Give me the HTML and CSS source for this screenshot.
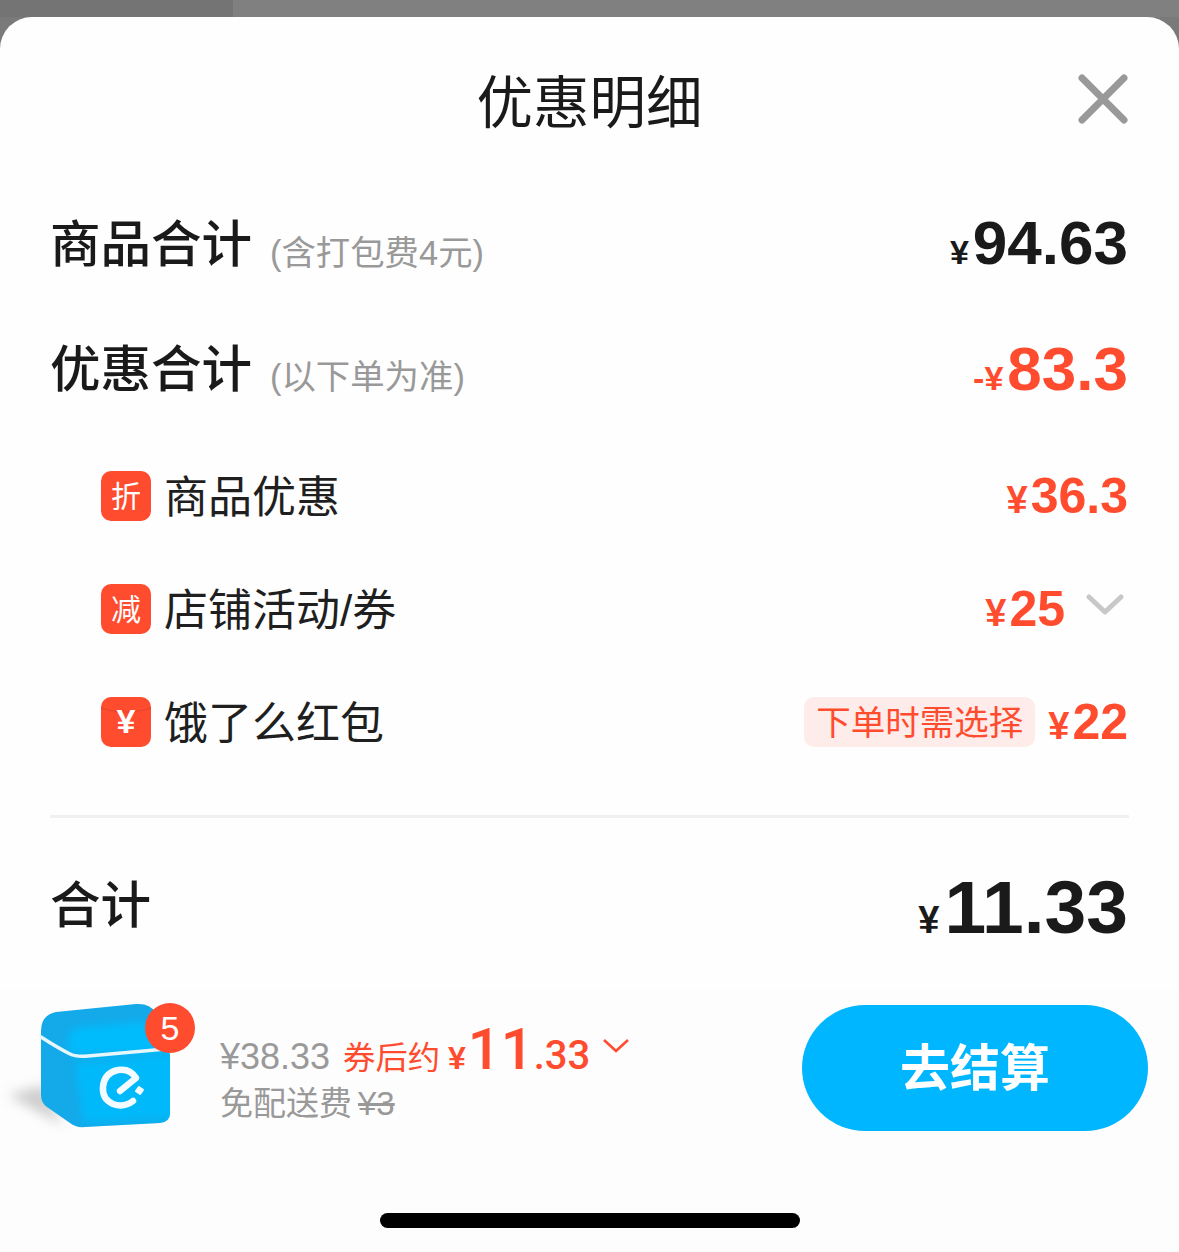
FILE: index.html
```html
<!DOCTYPE html>
<html lang="zh-CN">
<head>
<meta charset="utf-8">
<title>优惠明细</title>
<link rel="stylesheet" href="styles.css">
</head>
<body>
<div class="backdrop"><div class="backdrop-left"></div><div class="backdrop-right"></div></div>
<main class="sheet">
  <header class="head">
    <h1 class="title">优惠明细</h1>
    <svg class="close" viewBox="0 0 54 54" width="54" height="54"><path d="M6 6 L48 48 M48 6 L6 48" stroke="#999" stroke-width="7" stroke-linecap="round" fill="none"/></svg>
  </header>
  <section class="details">
    <div class="row row-main row-a">
      <div class="label"><span class="name">商品合计</span><span class="note">(含打包费4元)</span></div>
      <div class="price dark"><span class="cur">¥</span><span class="num">94.63</span></div>
    </div>
    <div class="row row-main row-b">
      <div class="label"><span class="name">优惠合计</span><span class="note">(以下单为准)</span></div>
      <div class="price red"><span class="cur">-¥</span><span class="num">83.3</span></div>
    </div>
    <div class="row row-sub">
      <div class="label"><span class="tag">折</span><span class="sub-name">商品优惠</span></div>
      <div class="price red small"><span class="cur">¥</span><span class="num">36.3</span></div>
    </div>
    <div class="row row-sub row-chev">
      <div class="label"><span class="tag">减</span><span class="sub-name">店铺活动/券</span></div>
      <div class="price-wrap">
        <div class="price red small"><span class="cur">¥</span><span class="num">25</span></div>
        <svg class="chev" viewBox="0 0 38 22" width="38" height="22"><path d="M3 3 L19 18 L35 3" stroke="#c8c8c8" stroke-width="5" stroke-linecap="round" stroke-linejoin="round" fill="none"/></svg>
      </div>
    </div>
    <div class="row row-sub">
      <div class="label"><span class="tag tag-yen">¥</span><span class="sub-name">饿了么红包</span></div>
      <div class="price-wrap">
        <span class="hint">下单时需选择</span>
        <div class="price red small"><span class="cur">¥</span><span class="num">22</span></div>
      </div>
    </div>
  </section>
  <hr class="divider">
  <div class="row row-total">
    <div class="label"><span class="name">合计</span></div>
    <div class="price dark big"><span class="cur">¥</span><span class="num">11.33</span></div>
  </div>
  <footer class="bar">
    <div class="bar-main">
      <div class="cart">
        <svg class="box" viewBox="0 0 180 145" width="180" height="145">
          <defs>
            <filter id="blur" x="-40%" y="-40%" width="180%" height="180%"><feGaussianBlur stdDeviation="6"/></filter>
            <filter id="soft" x="-20%" y="-20%" width="140%" height="140%"><feGaussianBlur stdDeviation="4"/></filter>
            <clipPath id="body"><path d="M41 36 Q41 20 56 17 L136 9 Q150 8 156 18 L170 60 L170 118 Q170 127 160 128 L85 132 Q76 133 70 128 L47 112 Q41 108 41 100 Z"/></clipPath>
          </defs>
          <path d="M8 100 L44 90 L62 130 Z" fill="#888" opacity=".4" filter="url(#blur)"/>
          <g clip-path="url(#body)">
            <rect x="30" y="0" width="150" height="140" fill="#14a9e8"/>
            <path d="M68 46 Q68 33 82 32 L175 24 L175 58 L70 60 Z" fill="#06bcfd" filter="url(#soft)"/>
            <path d="M74 68 L176 58 L176 124 L84 128 Z" fill="#06b9fa" filter="url(#soft)"/>
          </g>
          <path d="M41 42 Q58 53 70 59 Q76 62 88 61 L166 54" stroke="#e6f6fd" stroke-width="3.500" fill="none" stroke-linecap="round"/>
          <path d="M133 106 Q124 113 113 109 Q102 104 103 92 Q104 78 118 75 Q130 73 136 83 L120 96" stroke="#f2fbff" stroke-width="6.500" fill="none" stroke-linecap="round" stroke-linejoin="round"/>
          <rect x="136" y="92" width="7" height="7" rx="1" fill="#f2fbff" transform="rotate(35 139.500 95.500)"/>
        </svg>
        <span class="badge">5</span>
      </div>
      <div class="sum">
        <div class="line-1">
          <span class="orig">¥38.33</span>
          <span class="after">券后约</span>
          <span class="after-yen">¥</span><span class="after-big">11</span><span class="after-dec">.33</span>
          <svg class="chev-red" viewBox="0 0 28 16" width="28" height="16"><path d="M2 2 L14 13 L26 2" stroke="#ff4b2e" stroke-width="2.600" fill="none"/></svg>
        </div>
        <div class="line-2">免配送费<s class="old-fee">¥3</s></div>
      </div>
      <button class="pay" type="button">去结算</button>
    </div>
    <div class="home"></div>
  </footer>
</main>
</body>
</html>
```
FILE: styles.css
```css
* { box-sizing: border-box; margin: 0; padding: 0; }
html, body { width: 1179px; height: 1252px; overflow: hidden; }
body {
  background: #7a7a7a;
  font-family: "Liberation Sans", "Noto Sans CJK SC", sans-serif;
  color: #1a1a1a;
}
.backdrop { display: flex; height: 17px; }
.backdrop-left { width: 233px; background: #747474; }
.backdrop-right { flex: 1; background: #808080; }
.sheet {
  height: 1235px;
  background: #fefefe;
  border-radius: 32px 32px 0 0;
  overflow: hidden;
  display: flex;
  flex-direction: column;
}
.head {
  position: relative;
  height: 166px;
  display: flex;
  justify-content: center;
  padding-top: 49px;
}
.title { font-size: 56.500px; line-height: 64px; font-weight: 400; font-family: "Noto Sans CJK SC", sans-serif; color: #1a1a1a; }
.close { position: absolute; right: 49px; top: 55px; }
.details { display: flex; flex-direction: column; }
.row { display: flex; justify-content: space-between; align-items: center; padding: 0 51px 0 52px; }
.row-a { height: 120px; }
.row-b { height: 132px; margin-bottom: 4px; }
.row-sub { height: 113px; padding-left: 101px; }
.row-main .label, .row-total .label { margin-left: -2px; }
.label { display: flex; align-items: center; }
.name { font-family: "Noto Sans CJK SC", sans-serif; font-size: 50.500px; font-weight: 500; line-height: 60px; color: #1a1a1a; padding-bottom: 6px; }
.row-b .name { padding-bottom: 8px; }
.row-total .name { padding-bottom: 12px; }
.note { font-family: "Liberation Sans", "Noto Sans CJK SC", sans-serif; font-size: 34.400px; color: #999; margin-left: 18px; margin-top: 14px; }
.row-b .note { margin-top: 10px; }
.price { display: flex; align-items: baseline; font-weight: 700; }
.price .cur { font-size: 34px; margin-right: 4px; }
.price .num { font-size: 62px; line-height: 70px; }
.price.small .cur { font-size: 38px; margin-right: 3px; }
.price.small .num { font-size: 50px; line-height: 60px; }
.price.big .cur { font-size: 38px; margin-right: 5px; }
.price.big .num { font-size: 75px; line-height: 80px; }
.dark { color: #1a1a1a; }
.red { color: #ff4b2e; }
.tag {
  width: 50px; height: 50px;
  border-radius: 10px;
  background: #ff4b2e;
  color: #fff;
  font-family: "Noto Sans CJK SC", sans-serif;
  font-size: 30px;
  padding-bottom: 3px;
  display: flex; align-items: center; justify-content: center;
  flex: none;
}
.tag-yen {
  font-weight: 700;
  font-family: "Liberation Sans", sans-serif;
  font-size: 34px;
  padding-bottom: 0;
  background-image: radial-gradient(ellipse 38px 16px at 50% 0, #ff4b2e 86%, #e5462c 94%, #ff4b2e 100%);
}
.sub-name { font-family: "Liberation Sans", "Noto Sans CJK SC", sans-serif; font-size: 44px; line-height: 54px; margin-left: 13px; color: #1f1f1f; padding-top: 4px; }
.price-wrap { display: flex; align-items: center; }
.chev { margin: -8px -47px 0 21px; }
.row-chev { padding-right: 102px; }
.hint {
  height: 50px;
  padding: 0 12px;
  border-radius: 10px;
  background: #feecea;
  color: #ff4b2e;
  font-family: "Noto Sans CJK SC", sans-serif;
  font-size: 34.500px;
  line-height: 46px;
  margin-right: 13px;
}
.divider { border: 0; height: 3px; background: #f0f0f0; margin: 37px 50px 0; flex: none; }
.row-total { height: 178px; flex: none; }
.bar {
  flex: 1;
  background: #fdfdfd;
  margin-top: -6px;
  display: flex;
  flex-direction: column;
}
.bar-main { display: flex; height: 223px; padding-right: 31px; }
.cart { position: relative; width: 220px; height: 150px; flex: none; }
.box { display: block; margin-top: 5px; }
.badge {
  position: absolute; left: 145px; top: 13px;
  width: 50px; height: 50px; border-radius: 50%;
  background: #ff4b2e; color: #fff;
  font-size: 34px; line-height: 50px; text-align: center;
}
.sum { flex: 1; padding-top: 25px; }
.line-1 { display: flex; align-items: baseline; height: 66px; white-space: nowrap; }
.orig { font-size: 36px; color: #999; margin-right: 13px; }
.after { font-family: "Noto Sans CJK SC", sans-serif; font-size: 32.300px; color: #ff4b2e; margin-right: 8px; }
.after-yen { font-size: 32px; font-weight: 700; color: #ff4b2e; margin-right: 2px; }
.after-big { font-family: Roboto, sans-serif; font-size: 58px; color: #ff4b2e; font-weight: 500; }
.after-dec { font-family: Roboto, sans-serif; font-size: 40px; color: #ff4b2e; font-weight: 500; }
.chev-red { margin-left: 12px; align-self: center; margin-top: -4px; }
.line-2 { font-family: "Liberation Sans", "Noto Sans CJK SC", sans-serif; font-size: 33px; color: #999; line-height: 46px; }
.old-fee { margin-left: 6px; }
.pay {
  width: 346px; height: 126px;
  margin-top: 15px;
  padding-bottom: 8px;
  border: 0;
  border-radius: 63px;
  background: #00b6ff;
  color: #fff;
  font-family: "Noto Sans CJK SC", sans-serif;
  font-size: 50px;
  font-weight: 700;
  flex: none;
}
.home { width: 420px; height: 15px; border-radius: 8px; background: #000; margin-left: 380px; }
```
